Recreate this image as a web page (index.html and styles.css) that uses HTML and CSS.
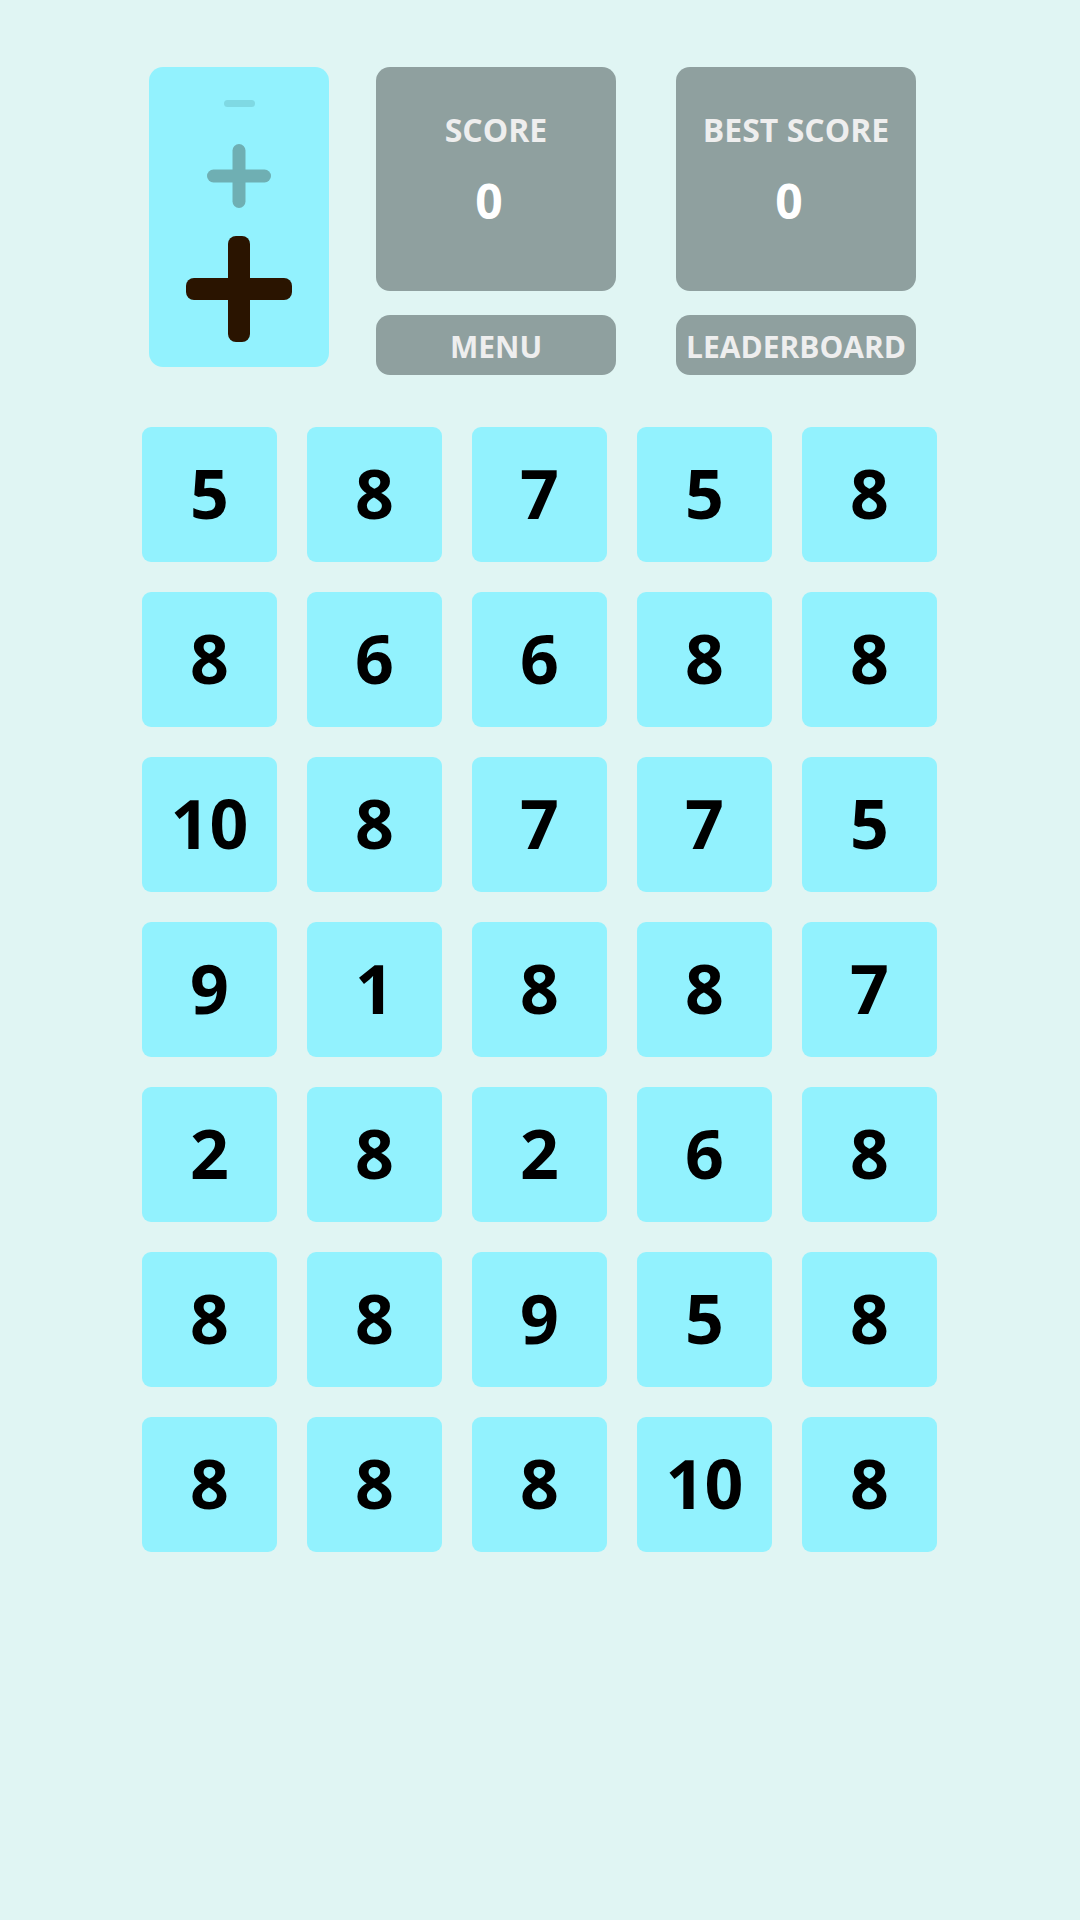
FILE: index.html
```html
<!DOCTYPE html>
<html>
<head>
<meta charset="utf-8">
<link rel="stylesheet" href="styles.css">
</head>
<body>
<div class="page">
  <div class="header">
    <div class="panel">
      <svg class="ic-minus" width="31" height="7" viewBox="0 0 31 7"><rect x="0" y="0" width="31" height="7" rx="3.5" fill="#7fd9e3"/></svg>
      <svg class="ic-plus-s" width="64" height="64" viewBox="0 0 64 64"><rect x="25.5" y="0" width="13" height="64" rx="6.5" fill="#6fafb3"/><rect x="0" y="25.5" width="64" height="13" rx="6.5" fill="#6fafb3"/></svg>
      <svg class="ic-plus-l" width="106" height="106" viewBox="0 0 106 106"><rect x="42" y="0" width="22" height="106" rx="8" fill="#2a1400"/><rect x="0" y="42" width="106" height="22" rx="8" fill="#2a1400"/></svg>
    </div>
    <div class="col col-score">
      <div class="box">
        <div class="label">SCORE</div>
        <div class="value">0</div>
      </div>
      <div class="btn">MENU</div>
    </div>
    <div class="col col-best">
      <div class="box">
        <div class="label">BEST SCORE</div>
        <div class="value">0</div>
      </div>
      <div class="btn">LEADERBOARD</div>
    </div>
  </div>
  <div class="grid">
    <div class="tile">5</div><div class="tile">8</div><div class="tile">7</div><div class="tile">5</div><div class="tile">8</div>
    <div class="tile">8</div><div class="tile">6</div><div class="tile">6</div><div class="tile">8</div><div class="tile">8</div>
    <div class="tile">10</div><div class="tile">8</div><div class="tile">7</div><div class="tile">7</div><div class="tile">5</div>
    <div class="tile">9</div><div class="tile">1</div><div class="tile">8</div><div class="tile">8</div><div class="tile">7</div>
    <div class="tile">2</div><div class="tile">8</div><div class="tile">2</div><div class="tile">6</div><div class="tile">8</div>
    <div class="tile">8</div><div class="tile">8</div><div class="tile">9</div><div class="tile">5</div><div class="tile">8</div>
    <div class="tile">8</div><div class="tile">8</div><div class="tile">8</div><div class="tile">10</div><div class="tile">8</div>
  </div>
</div>
</body>
</html>
```
FILE: styles.css
```css
html, body {
  margin: 0;
  padding: 0;
  background: #e0f5f3;
}
body {
  width: 1080px;
  height: 1920px;
  font-family: "Open Sans", "Noto Sans", sans-serif;
}
.page {
  padding-top: 67px;
}
.header {
  display: flex;
  align-items: flex-start;
  padding-left: 149px;
}
.panel {
  width: 180px;
  height: 300px;
  flex: none;
  box-sizing: border-box;
  background: #92f2fe;
  border-radius: 14px;
  display: flex;
  flex-direction: column;
  align-items: center;
  padding-top: 33px;
}
.panel svg { display: block; }
.ic-plus-s { margin-top: 37px; }
.ic-plus-l { margin-top: 28px; }
.col {
  width: 240px;
  flex: none;
  display: flex;
  flex-direction: column;
}
.col-score { margin-left: 47px; }
.col-best { margin-left: 60px; }
.box {
  height: 224px;
  box-sizing: border-box;
  background: #8fa09f;
  border-radius: 14px;
  padding-top: 43px;
  text-align: center;
  color: #eeeeee;
}
.label {
  font-size: 32px;
  line-height: 40px;
  font-weight: 700;
}
.value {
  margin-top: 23px;
  font-size: 48px;
  line-height: 56px;
  font-weight: 700;
  color: #ffffff;
  padding-right: 14px;
}
.btn {
  margin-top: 24px;
  height: 60px;
  background: #8fa09f;
  border-radius: 14px;
  display: flex;
  align-items: center;
  justify-content: center;
  color: #eeeeee;
  font-size: 30px;
  font-weight: 700;
  padding-top: 2px;
  box-sizing: border-box;
}
.grid {
  margin-top: 52px;
  margin-left: 142px;
  display: grid;
  grid-template-columns: repeat(5, 135px);
  grid-auto-rows: 135px;
  gap: 30px;
}
.tile {
  background: #92f2fe;
  border-radius: 9px;
  display: flex;
  align-items: center;
  justify-content: center;
  font-size: 68px;
  font-weight: 700;
  color: #000000;
  padding-bottom: 4px;
  box-sizing: border-box;
}
```
